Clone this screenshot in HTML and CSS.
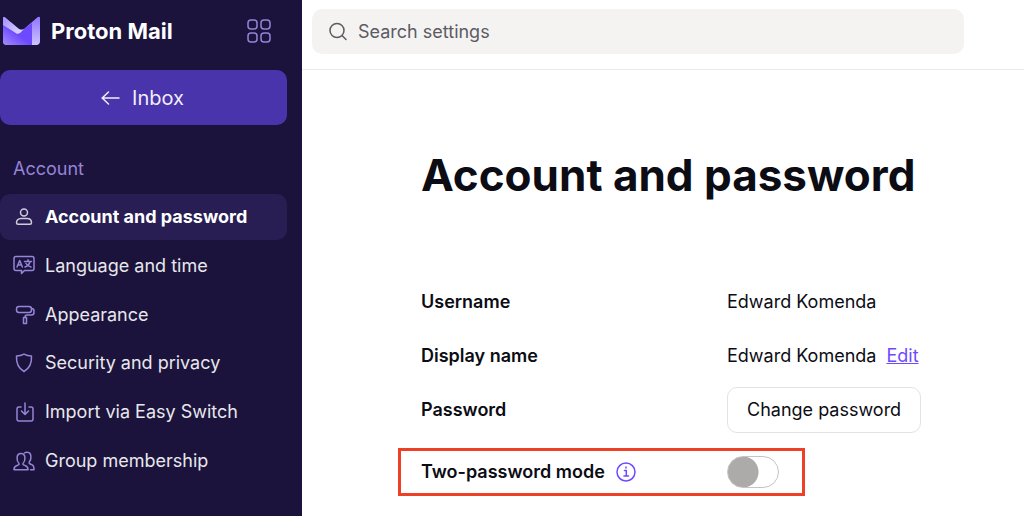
FILE: index.html
```html
<!DOCTYPE html>
<html lang="en">
<head>
    <meta charset="UTF-8">
    <meta name="viewport" content="width=device-width, initial-scale=1.0">
    <title>Account and password</title>
    <link rel="stylesheet" href="styles.css">
</head>
<body>
    <aside class="sidebar">
        <div class="brand">
            <a class="logo" href="#">
                <svg width="38" height="30" viewBox="0 0 38 30" aria-hidden="true">
                    <defs>
                        <linearGradient id="body" x1="0" y1="1" x2="1" y2="0">
                            <stop offset="0" stop-color="#a48cff"/>
                            <stop offset="0.5" stop-color="#6d4aff"/>
                        </linearGradient>
                        <linearGradient id="side" x1="0" y1="0" x2="0" y2="1">
                            <stop offset="0" stop-color="#8f74ff"/>
                            <stop offset="1" stop-color="#cfc3ff"/>
                        </linearGradient>
                        <linearGradient id="flap" x1="0" y1="0" x2="1" y2="1">
                            <stop offset="0" stop-color="#a28bff"/>
                            <stop offset="1" stop-color="#e3dcff"/>
                        </linearGradient>
                    </defs>
                    <path d="M0 8L36 1v24q0 4-4 4H4q-4 0-4-4z" fill="url(#side)"/>
                    <path d="M0 8l14 10L29 7v22H4q-4 0-4-4z" fill="url(#body)"/>
                    <path d="M0 2q0-2 2-1l14 12q2 2 5 0l-4 4q-2 1-4 0L0 9z" fill="url(#flap)"/>
                    <path d="M0 1.500Q0 0 2 1L15.500 12.500q3 2 6 0L35 1q2-1 2 1V-1H0z" fill="#1b133b"/>
                    <path d="M29 6.500L35 1q2-1 2 1v23q0 4-4 4h-4z" fill="url(#side)"/>
                </svg>
                <span>Proton Mail</span>
            </a>
            <button class="apps" type="button" aria-label="Apps">
                <svg width="26" height="26" viewBox="0 0 26 26">
                    <rect x="2" y="2" width="9" height="9" rx="3"/>
                    <rect x="15" y="2" width="9" height="9" rx="3"/>
                    <rect x="2" y="15" width="9" height="9" rx="3"/>
                    <rect x="15" y="15" width="9" height="9" rx="3"/>
                </svg>
            </button>
        </div>
        <button class="inbox" type="button">
            <svg width="20" height="16" viewBox="0 0 20 16"><path d="M18 8H1M7.500 2L1.200 8l6.300 6"/></svg>
            Inbox
        </button>
        <h2 class="section-title">Account</h2>
        <nav class="menu">
            <a class="menu-item active" href="#">
                <svg class="icon" viewBox="0 0 24 24"><circle cx="12" cy="7.500" r="3.500"/><path d="M9 13.500h6c3 0 4.500 2 4.500 4.200q0 1.500-1.500 1.500H6q-1.500 0-1.500-1.500c0-2.200 1.500-4.200 4.500-4.200z"/></svg>
                Account and password
            </a>
            <a class="menu-item" href="#">
                <svg class="icon" viewBox="0 0 24 24"><path d="M4 2.500h16q2 0 2 2v10q0 2-2 2h-7.500L9.500 19.500v-3H4q-2 0-2-2v-10q0-2 2-2z"/><path d="M5 13L7.700 6.500l2.700 6.500M6 11h3.500M12.500 7.500h7M16 5.800v1.700M13 13c3-1 4.500-3 5-5.500M14 9.500c1 1.800 3 3 5 3.500"/></svg>
                Language and time
            </a>
            <a class="menu-item" href="#">
                <svg class="icon" viewBox="0 0 24 24"><rect x="4.500" y="3.500" width="15" height="6" rx="2.500"/><path d="M19.500 5.500q2.500 0 2.500 2.500v1.500q0 2.500-2.500 2.500H15q-2 0-2 2M11.500 14.500h3v6h-3z"/></svg>
                Appearance
            </a>
            <a class="menu-item" href="#">
                <svg class="icon" viewBox="0 0 24 24"><path d="M12 3.200c2.200 1.200 4.600 1.800 7.500 1.800.4 6.500-1.500 12-7.500 15.500C6 17 4.100 11.500 4.500 5c2.900 0 5.300-.6 7.500-1.800z"/></svg>
                Security and privacy
            </a>
            <a class="menu-item" href="#">
                <svg class="icon" viewBox="0 0 24 24"><path d="M9 7H7Q5 7 5 9v10q0 2 2 2h12q2 0 2-2V9q0-2-2-2h-2M13 3v11.500M9.500 11l3.500 3.500 3.500-3.500"/></svg>
                Import via Easy Switch
            </a>
            <a class="menu-item" href="#">
                <svg class="icon" viewBox="0 0 24 24"><path d="M7 14.500C4.700 12.500 3.500 4.500 9 4.500s4.300 8 2 10c-.5 1 .7 1.700 2 2 2 .5 3 1.500 3 4.200H2c0-2.700 1-3.700 3-4.200 1.300-.3 2.500-1 2-2zM12.500 3.800c1-.5 2-.8 3-.6 4.500.4 4 7.300 1.800 9.800-.7 1.500.7 2 2.200 2.500 2 .5 2.500 2 2.500 5.200H18.500"/></svg>
                Group membership
            </a>
        </nav>
    </aside>
    <div class="page">
        <header class="topbar">
            <label class="search">
                <svg width="20" height="20" viewBox="0 0 20 20"><circle cx="9" cy="8.500" r="7"/><path d="M14 13.500L18 17.500"/></svg>
                <input type="text" placeholder="Search settings" aria-label="Search settings">
            </label>
        </header>
        <main class="content">
            <h1>Account and password</h1>
            <div class="row">
                <span class="label">Username</span>
                <span>Edward Komenda</span>
            </div>
            <div class="row">
                <span class="label">Display name</span>
                <span class="value">Edward Komenda <a href="#">Edit</a></span>
            </div>
            <div class="row">
                <span class="label">Password</span>
                <button class="change" type="button">Change password</button>
            </div>
            <div class="row highlight">
                <div class="label with-info">
                    <label for="twoPassword">Two-password mode</label>
                    <button class="info" type="button" aria-label="More info">
                        <svg width="20" height="20" viewBox="0 0 20 20"><circle cx="10" cy="10" r="9"/><path d="M8.500 8.500H10.300V14M8 14h4.500M10 5v1"/></svg>
                    </button>
                </div>
                <input class="toggle" type="checkbox" id="twoPassword">
            </div>
        </main>
    </div>
</body>
</html>
```
FILE: styles.css
```css
* {
    box-sizing: border-box;
}
body {
    display: flex;
    min-height: 100vh;
    margin: 0;
    font-family: Inter, "Liberation Sans", sans-serif;
    font-size: 18px;
    line-height: 24px;
    color: #0c0c14;
    background-color: #fff;
}
button, input {
    font: inherit;
    color: inherit;
}
button {
    padding: 0;
    border: none;
    background: none;
    cursor: pointer;
}
svg {
    flex: none;
    fill: none;
    stroke: currentColor;
    stroke-width: 1.5;
    stroke-linecap: round;
    stroke-linejoin: round;
}
.sidebar {
    flex: none;
    width: 302px;
    padding-right: 15px;
    color: #e8e7ec;
    background-color: #1b133b;
}
.brand {
    display: flex;
    align-items: center;
    justify-content: space-between;
    height: 62px;
    padding: 0 15px 0 3px;
}
.logo {
    display: flex;
    align-items: center;
    gap: 10px;
    font-size: 22px;
    font-weight: 700;
    color: #fff;
    text-decoration: none;
}
.logo svg {
    stroke: none;
}
.apps {
    display: flex;
    color: #9684d6;
}
.inbox {
    display: flex;
    align-items: center;
    justify-content: center;
    gap: 11px;
    width: 100%;
    height: 55px;
    margin-top: 8px;
    padding-right: 2px;
    border-radius: 10px;
    font-size: 20px;
    color: #f1eefb;
    background-color: #4934ab;
}
.section-title {
    margin: 32px 0 13px 13px;
    font-size: 18px;
    font-weight: 400;
    color: #9684d6;
}
.menu {
    display: flex;
    flex-direction: column;
    justify-content: space-between;
    min-height: 290px;
}
.menu-item {
    display: flex;
    align-items: center;
    gap: 9px;
    height: 46px;
    padding-left: 12px;
    border-radius: 10px;
    color: inherit;
    text-decoration: none;
}
.menu-item.active {
    font-weight: 700;
    color: #fff;
    background-color: #281e54;
}
.icon {
    width: 24px;
    height: 24px;
    color: #9684d6;
}
.active .icon {
    color: #cfcbd8;
}
.page {
    flex: 1;
}
.topbar {
    padding: 9px 60px 15px 10px;
    border-bottom: 1px solid #ececec;
}
.search {
    display: flex;
    align-items: center;
    gap: 10px;
    height: 45px;
    padding: 0 16px;
    border-radius: 10px;
    color: #5c5b63;
    background-color: #f4f3f2;
}
.search input {
    flex: 1;
    padding: 0;
    border: none;
    outline: none;
    background: none;
}
.search input::placeholder {
    color: #5c5b63;
    opacity: 1;
}
.content {
    padding: 77px 24px 20px 119px;
}
h1 {
    margin: 0 0 72px;
    font-size: 44px;
    line-height: 56px;
    font-weight: 700;
}
.row {
    display: grid;
    grid-template-columns: 306px auto;
    align-items: center;
    justify-content: start;
    min-height: 54px;
}
.label {
    font-weight: 600;
}
.value {
    display: flex;
    gap: 10px;
}
.value a {
    color: #6d4aff;
}
.change {
    height: 46px;
    padding: 0 19px;
    border: 1px solid #e3e3e3;
    border-radius: 10px;
}
.highlight {
    width: fit-content;
    min-height: 48px;
    margin: 11px 0 0 -23px;
    padding: 0 23px 0 20px;
    border: 3px solid #ee4026;
}
.with-info {
    display: flex;
    align-items: center;
    gap: 11px;
}
.info {
    display: flex;
    color: #6d4aff;
}
.toggle {
    appearance: none;
    width: 52px;
    height: 32px;
    margin: 0;
    border: 1px solid #c4c4c4;
    border-radius: 16px;
    background: radial-gradient(circle at 15px 15px, #adabaa 15px, transparent 16px);
    cursor: pointer;
}
.toggle:checked {
    background: radial-gradient(circle at 35px 15px, #6d4aff 15px, transparent 16px);
}
```
